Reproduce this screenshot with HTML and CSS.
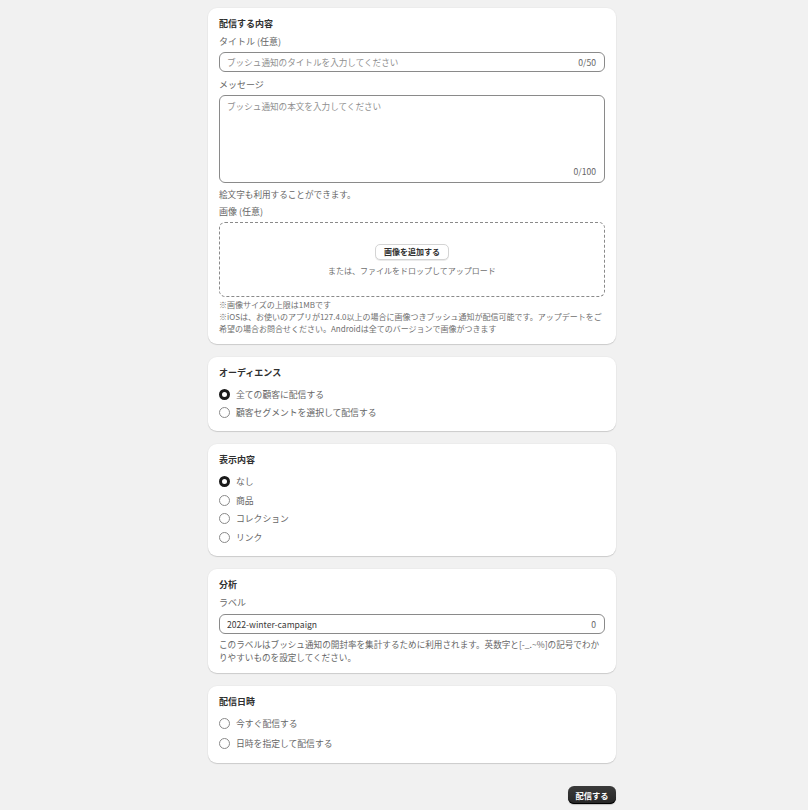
FILE: index.html
```html
<!DOCTYPE html>
<html lang="ja">
<head>
    <meta charset="UTF-8">
    <meta name="viewport" content="width=device-width, initial-scale=1.0">
    <title>プッシュ通知の作成</title>
    <link rel="stylesheet" href="styles.css">
</head>
<body>
    <div class="page">
        <!-- 配信する内容 -->
        <div class="card">
            <h2 class="card-title">配信する内容</h2>
            <label class="field-label">タイトル (任意)</label>
            <div class="text-field">
                <input type="text" placeholder="ブッシュ通知のタイトルを入力してください">
                <span class="counter">0/50</span>
            </div>
            <label class="field-label spaced">メッセージ</label>
            <div class="text-field multi">
                <textarea placeholder="ブッシュ通知の本文を入力してください"></textarea>
                <span class="counter">0/100</span>
            </div>
            <p class="help-text">絵文字も利用することができます。</p>
            <label class="field-label">画像 (任意)</label>
            <div class="dropzone">
                <button type="button" class="plain-button">画像を追加する</button>
                <span class="dropzone-hint">または、ファイルをドロップしてアップロード</span>
            </div>
            <p class="note first">※画像サイズの上限は1MBです</p>
            <p class="note">※iOSは、お使いのアプリが127.4.0以上の場合に画像つきブッシュ通知が配信可能です。アップデートをご希望の場合お問合せください。Androidは全てのバージョンで画像がつきます</p>
        </div>

        <!-- オーディエンス -->
        <div class="card">
            <h2 class="card-title">オーディエンス</h2>
            <div class="choices">
                <label class="choice"><span class="radio checked"></span>全ての顧客に配信する</label>
                <label class="choice"><span class="radio"></span>顧客セグメントを選択して配信する</label>
            </div>
        </div>

        <!-- 表示内容 -->
        <div class="card">
            <h2 class="card-title">表示内容</h2>
            <div class="choices">
                <label class="choice"><span class="radio checked"></span>なし</label>
                <label class="choice"><span class="radio"></span>商品</label>
                <label class="choice"><span class="radio"></span>コレクション</label>
                <label class="choice"><span class="radio"></span>リンク</label>
            </div>
        </div>

        <!-- 分析 -->
        <div class="card">
            <h2 class="card-title">分析</h2>
            <label class="field-label label-gap">ラベル</label>
            <div class="text-field label-input">
                <input type="text" value="2022-winter-campaign">
                <span class="counter">0</span>
            </div>
            <p class="help-text wrap">このラベルはブッシュ通知の開封率を集計するために利用されます。英数字と[-_.~%]の記号でわかりやすいものを設定してください。</p>
        </div>

        <!-- 配信日時 -->
        <div class="card">
            <h2 class="card-title">配信日時</h2>
            <div class="choices loose">
                <label class="choice"><span class="radio"></span>今すぐ配信する</label>
                <label class="choice"><span class="radio"></span>日時を指定して配信する</label>
            </div>
        </div>

        <div class="actions">
            <button type="button" class="primary-button">配信する</button>
        </div>
    </div>
</body>
</html>
```

FILE: styles.css
```css
body {
    margin: 0;
    background: #f1f1f1;
    font-family: "Noto Sans CJK JP", "Noto Sans", sans-serif;
    font-size: 9px;
    color: #303030;
}
.page {
    width: 408px;
    margin: 0 auto;
    padding: 8px 0 20px 16px;
    display: flex;
    flex-direction: column;
    gap: 13px;
}
.card {
    background: #fff;
    border-radius: 9px;
    padding: 9px 11px 9px;
    box-shadow: 0 1px 1px rgba(0, 0, 0, 0.14), 0 0 0 1px rgba(0, 0, 0, 0.02);
    display: flex;
    flex-direction: column;
}
.card-title {
    margin: 0;
    font-size: 9px;
    font-weight: 700;
    line-height: 14px;
    color: #303030;
}
.field-label {
    margin-top: 4px;
    line-height: 14px;
    color: #666;
}
.field-label.spaced {
    margin-top: 6px;
}
.text-field {
    margin-top: 3px;
    height: 20px;
    border: 1px solid #8a8a8a;
    border-radius: 6px;
    box-sizing: border-box;
    display: flex;
    align-items: center;
    padding: 0 8px 0 7px;
    gap: 8px;
}
.text-field.label-input {
    margin-top: 4px;
}
.text-field input,
.text-field textarea {
    flex: 1;
    border: none;
    outline: none;
    padding: 0;
    background: transparent;
    font: inherit;
    font-size: 8.6px;
    color: #3a3a3a;
}
.text-field input::placeholder,
.text-field textarea::placeholder {
    color: #8f8f8f;
}
.counter {
    font-size: 8.6px;
    color: #666;
}
.text-field.multi {
    height: 88px;
    align-items: stretch;
    flex-direction: column;
    padding: 3px 8px 4px 7px;
    gap: 0;
}
.text-field.multi textarea {
    resize: none;
    line-height: 14px;
}
.text-field.multi .counter {
    align-self: flex-end;
    line-height: 14px;
}
.help-text {
    margin: 4px 0 0;
    font-size: 8.6px;
    line-height: 14px;
    color: #666;
}
.help-text.wrap {
    margin-top: 4px;
    line-height: 13px;
}
.dropzone {
    margin-top: 3px;
    height: 75px;
    box-sizing: border-box;
    border: 1px dashed #8a8a8a;
    border-radius: 6px;
    display: flex;
    flex-direction: column;
    align-items: center;
    justify-content: center;
    gap: 4px;
    padding-top: 1px;
}
.plain-button {
    height: 16px;
    padding: 0 8px;
    border: 1px solid #d4d4d4;
    border-radius: 5px;
    background: #fff;
    box-shadow: 0 1px 0 rgba(0, 0, 0, 0.08);
    font: inherit;
    font-size: 8px;
    font-weight: 700;
    color: #303030;
}
.dropzone-hint {
    font-size: 8px;
    line-height: 13px;
    color: #707070;
}
.note {
    margin: 0;
    font-size: 8px;
    line-height: 12px;
    color: #707070;
}
.note.first {
    margin-top: 2px;
}
.choices {
    margin-top: 5px;
    display: flex;
    flex-direction: column;
}
.choice {
    height: 18.6px;
    display: flex;
    align-items: center;
    gap: 6px;
    font-size: 8.8px;
    color: #666;
}
.choices.loose .choice {
    height: 20px;
}
.radio {
    width: 11px;
    height: 11px;
    box-sizing: border-box;
    border: 1px solid #8a8a8a;
    border-radius: 50%;
    background: #fff;
}
.radio.checked {
    border: 3.5px solid #1a1a1a;
}
.actions {
    margin-top: 10px;
    display: flex;
    justify-content: flex-end;
}
.primary-button {
    height: 18px;
    width: 48px;
    padding: 0;
    border: none;
    border-radius: 6px;
    background: linear-gradient(#3b3b3b, #262626);
    box-shadow: inset 0 -1px 0 #000, 0 1px 1px rgba(0, 0, 0, 0.2);
    color: #fff;
    font: inherit;
    font-size: 8.25px;
    font-weight: 700;
}
```
